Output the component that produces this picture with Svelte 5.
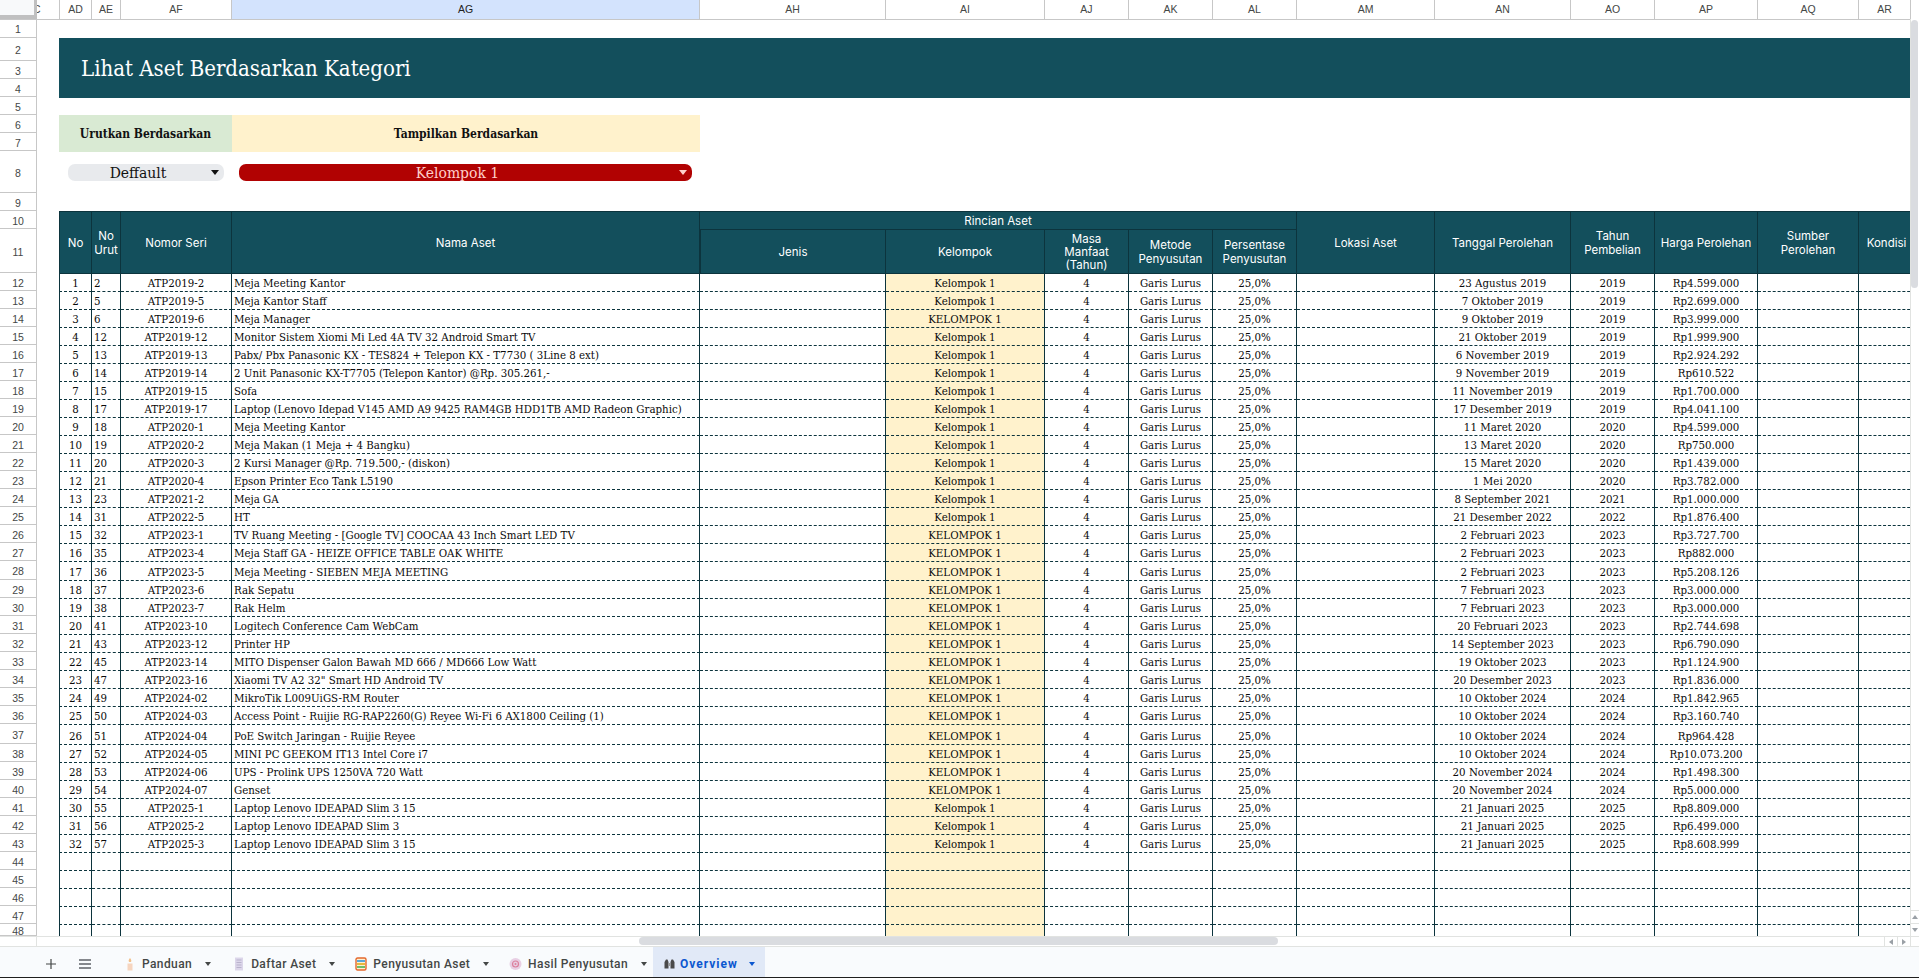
<script lang="ts">
  type Asset = [number, string, string, string, string];

  const columns = [
    { name: "C", width: 23 },
    { name: "AD", width: 32 },
    { name: "AE", width: 29 },
    { name: "AF", width: 111 },
    { name: "AG", width: 468 },
    { name: "AH", width: 186 },
    { name: "AI", width: 159 },
    { name: "AJ", width: 84 },
    { name: "AK", width: 84 },
    { name: "AL", width: 84 },
    { name: "AM", width: 138 },
    { name: "AN", width: 136 },
    { name: "AO", width: 84 },
    { name: "AP", width: 103 },
    { name: "AQ", width: 101 },
    { name: "AR", width: 52 },
  ];

  const rowHeights: Record<number, number> = {
    1: 19, 2: 23, 8: 42, 11: 44, 28: 19, 37: 20, 48: 12,
  };
  const rowNumbers = Array.from({ length: 48 }, (_, i) => i + 1);

  const assets: Asset[] = [
    [2, "ATP2019-2", "Meja Meeting Kantor", "23 Agustus 2019", "Rp4.599.000"],
    [5, "ATP2019-5", "Meja Kantor Staff", "7 Oktober 2019", "Rp2.699.000"],
    [6, "ATP2019-6", "Meja Manager", "9 Oktober 2019", "Rp3.999.000"],
    [12, "ATP2019-12", "Monitor Sistem Xiomi Mi Led 4A TV 32 Android Smart TV", "21 Oktober 2019", "Rp1.999.900"],
    [13, "ATP2019-13", "Pabx/ Pbx Panasonic KX - TES824 + Telepon KX - T7730 ( 3Line 8 ext)", "6 November 2019", "Rp2.924.292"],
    [14, "ATP2019-14", "2 Unit Panasonic KX-T7705 (Telepon Kantor) @Rp. 305.261,-", "9 November 2019", "Rp610.522"],
    [15, "ATP2019-15", "Sofa", "11 November 2019", "Rp1.700.000"],
    [17, "ATP2019-17", "Laptop (Lenovo Idepad V145 AMD A9 9425 RAM4GB HDD1TB AMD Radeon Graphic)", "17 Desember 2019", "Rp4.041.100"],
    [18, "ATP2020-1", "Meja Meeting Kantor", "11 Maret 2020", "Rp4.599.000"],
    [19, "ATP2020-2", "Meja Makan (1 Meja + 4 Bangku)", "13 Maret 2020", "Rp750.000"],
    [20, "ATP2020-3", "2 Kursi Manager @Rp. 719.500,- (diskon)", "15 Maret 2020", "Rp1.439.000"],
    [21, "ATP2020-4", "Epson Printer Eco Tank L5190", "1 Mei 2020", "Rp3.782.000"],
    [23, "ATP2021-2", "Meja GA", "8 September 2021", "Rp1.000.000"],
    [31, "ATP2022-5", "HT", "21 Desember 2022", "Rp1.876.400"],
    [32, "ATP2023-1", "TV Ruang Meeting - [Google TV] COOCAA 43 Inch Smart LED TV", "2 Februari 2023", "Rp3.727.700"],
    [35, "ATP2023-4", "Meja Staff GA - HEIZE OFFICE TABLE OAK WHITE", "2 Februari 2023", "Rp882.000"],
    [36, "ATP2023-5", "Meja Meeting - SIEBEN MEJA MEETING", "2 Februari 2023", "Rp5.208.126"],
    [37, "ATP2023-6", "Rak Sepatu", "7 Februari 2023", "Rp3.000.000"],
    [38, "ATP2023-7", "Rak Helm", "7 Februari 2023", "Rp3.000.000"],
    [41, "ATP2023-10", "Logitech Conference Cam WebCam", "20 Februari 2023", "Rp2.744.698"],
    [43, "ATP2023-12", "Printer HP", "14 September 2023", "Rp6.790.090"],
    [45, "ATP2023-14", "MITO Dispenser Galon Bawah MD 666 / MD666 Low Watt", "19 Oktober 2023", "Rp1.124.900"],
    [47, "ATP2023-16", 'Xiaomi TV A2 32" Smart HD Android TV', "20 Desember 2023", "Rp1.836.000"],
    [49, "ATP2024-02", "MikroTik L009UiGS-RM Router", "10 Oktober 2024", "Rp1.842.965"],
    [50, "ATP2024-03", "Access Point - Ruijie RG-RAP2260(G) Reyee Wi-Fi 6 AX1800 Ceiling (1)", "10 Oktober 2024", "Rp3.160.740"],
    [51, "ATP2024-04", "PoE Switch Jaringan - Ruijie Reyee", "10 Oktober 2024", "Rp964.428"],
    [52, "ATP2024-05", "MINI PC GEEKOM IT13 Intel Core i7", "10 Oktober 2024", "Rp10.073.200"],
    [53, "ATP2024-06", "UPS - Prolink UPS 1250VA 720 Watt", "20 November 2024", "Rp1.498.300"],
    [54, "ATP2024-07", "Genset", "20 November 2024", "Rp5.000.000"],
    [55, "ATP2025-1", "Laptop Lenovo IDEAPAD Slim 3 15", "21 Januari 2025", "Rp8.809.000"],
    [56, "ATP2025-2", "Laptop Lenovo IDEAPAD Slim 3", "21 Januari 2025", "Rp6.499.000"],
    [57, "ATP2025-3", "Laptop Lenovo IDEAPAD Slim 3 15", "21 Januari 2025", "Rp8.608.999"],
  ];

  const groupLabel = (no: number) =>
    no === 3 || (no >= 15 && no <= 29) ? "KELOMPOK 1" : "Kelompok 1";

  const tableColumns = [33, 29, 111, 468, 186, 159, 84, 84, 84, 138, 136, 84, 103, 101, 56];
  const emptyRows = [44, 45, 46, 47, 48];
  const tabs = ["Panduan", "Daftar Aset", "Penyusutan Aset", "Hasil Penyusutan", "Overview"];
</script>

<div class="app">
  <div class="col-heads">
    <div class="corner"></div>
    {#each columns as col}
      <div class="col-head" class:selected={col.name === "AG"} class:clip={col.name === "C"} style:width="{col.width}px">
        {col.name}
      </div>
    {/each}
  </div>

  <div class="main">
    <div class="row-heads">
      {#each rowNumbers as n}
        <div class="row-head" style:height="{rowHeights[n] ?? 18}px">{n}</div>
      {/each}
    </div>

    <div class="sheet">
      <h1 class="banner">Lihat Aset Berdasarkan Kategori</h1>

      <div class="filter-labels">
        <div class="label-sort">Urutkan Berdasarkan</div>
        <div class="label-show">Tampilkan Berdasarkan</div>
      </div>

      <div class="filter-chips">
        <div class="chip chip-sort">
          <span>Deffault</span>
          <i class="caret"></i>
        </div>
        <div class="chip chip-group">
          <span>Kelompok 1</span>
          <i class="caret"></i>
        </div>
      </div>

      <table>
        <colgroup>
          {#each tableColumns as width}
            <col style:width="{width}px" />
          {/each}
        </colgroup>
        <thead>
          <tr class="head-top">
            <th rowspan="2">No</th>
            <th rowspan="2">No<br />Urut</th>
            <th rowspan="2">Nomor Seri</th>
            <th rowspan="2">Nama Aset</th>
            <th colspan="5">Rincian Aset</th>
            <th rowspan="2">Lokasi Aset</th>
            <th rowspan="2">Tanggal Perolehan</th>
            <th rowspan="2">Tahun<br />Pembelian</th>
            <th rowspan="2">Harga Perolehan</th>
            <th rowspan="2">Sumber<br />Perolehan</th>
            <th rowspan="2">Kondisi</th>
          </tr>
          <tr class="head-bottom">
            <th>Jenis</th>
            <th>Kelompok</th>
            <th class="tight">Masa<br />Manfaat<br />(Tahun)</th>
            <th>Metode<br />Penyusutan</th>
            <th>Persentase<br />Penyusutan</th>
          </tr>
        </thead>
        <tbody>
          {#each assets as [urut, serial, name, date, price], i}
            <tr class:row-19={i + 12 === 28} class:row-20={i + 12 === 37}>
              <td class="center">{i + 1}</td>
              <td class="left">{urut}</td>
              <td class="center">{serial}</td>
              <td class="left">{name}</td>
              <td></td>
              <td class="center group">{groupLabel(i + 1)}</td>
              <td class="center">4</td>
              <td class="center">Garis Lurus</td>
              <td class="center">25,0%</td>
              <td></td>
              <td class="center">{date}</td>
              <td class="center">{date.slice(-4)}</td>
              <td class="center">{price}</td>
              <td></td>
              <td></td>
            </tr>
          {/each}
          {#each emptyRows as _}
            <tr>
              {#each tableColumns as _w, c}
                <td class:group={c === 5}></td>
              {/each}
            </tr>
          {/each}
        </tbody>
      </table>
    </div>

    <div class="v-scroll">
      <div class="v-track"><div class="v-thumb"></div></div>
      <div class="v-btn"><i class="tri up"></i></div>
      <div class="v-btn"><i class="tri down"></i></div>
    </div>
  </div>

  <div class="h-scroll">
    <div class="h-gutter"></div>
    <div class="h-track"><div class="h-thumb"></div></div>
    <div class="h-btn"><i class="tri left-tri"></i></div>
    <div class="h-btn"><i class="tri right-tri"></i></div>
    <div class="h-end"></div>
  </div>

  <div class="tab-bar">
    <button class="tool" type="button" aria-label="Tambah sheet">
      <svg width="12" height="12" viewBox="0 0 12 12"><path d="M6 1v10M1 6h10" stroke="#444746" stroke-width="1.2" /></svg>
    </button>
    <button class="tool" type="button" aria-label="Semua sheet">
      <svg width="14" height="14" viewBox="0 0 14 14"><path d="M1 3h12M1 7h12M1 11h12" stroke="#5f6368" stroke-width="1.4" /></svg>
    </button>
    <div class="tabs">
      {#each tabs as tab, i}
        <div class="tab" class:active={i === 4}>
          {#if i === 0}
            <svg width="12" height="14" viewBox="0 0 12 14">
              <path d="M3.5 6.5h5V13.5h-5z" fill="#f6d5bf" />
              <path d="M6 1c1.2 1.6 1.6 2.4 1.2 3.4-.3.9-2 .9-2.4 0C4.4 3.4 4.8 2.6 6 1z" fill="#f3c08a" />
            </svg>
          {:else if i === 1}
            <svg width="12" height="14" viewBox="0 0 12 14">
              <path d="M2 .5h8v13H2z" fill="#dcd6ea" />
              <path d="M3.5 3h5M3.5 5.500h5M3.5 8h5M3.5 10.500h5" stroke="#b9b2cc" stroke-width="1" />
            </svg>
          {:else if i === 2}
            <svg width="12" height="14" viewBox="0 0 12 14">
              <rect x="1" y="1" width="10" height="12" rx="1.5" fill="#fdf0d2" stroke="#e4682c" stroke-width="1.4" />
              <path d="M2 4h8" stroke="#5aa6d8" stroke-width="2" />
              <path d="M2 7h8" stroke="#e8b93c" stroke-width="2" />
              <path d="M2 10h8" stroke="#6fbe6a" stroke-width="2" />
            </svg>
          {:else if i === 3}
            <svg width="13" height="14" viewBox="0 0 13 14">
              <circle cx="6.5" cy="7" r="6" fill="#e8cfe4" />
              <circle cx="6.5" cy="7" r="3" fill="none" stroke="#dc7f9c" stroke-width="1.2" />
              <circle cx="6.5" cy="7" r="1" fill="#dc7f9c" />
            </svg>
          {:else}
            <svg width="13" height="14" viewBox="0 0 13 14">
              <path d="M1.5 5 3 2.500h1.500L5.500 5v6.500h-4zM7.500 5l1-2.500H10L11.500 5v6.500h-4z" fill="#4a4a4a" />
              <path d="M5.500 6h2v3h-2z" fill="#9a9a9a" />
            </svg>
          {/if}
          <span>{tab}</span>
          <i class="tab-caret"></i>
        </div>
      {/each}
    </div>
  </div>
</div>

<style>
  :global(body) {
    margin: 0;
    background: #fff;
  }

  .app {
    display: flex;
    flex-direction: column;
    width: 1919px;
    height: 978px;
    overflow: hidden;
    font-family: "DejaVu Serif", "Liberation Serif", serif;
    font-stretch: condensed;
    color: #111;
  }

  /* sheet chrome */
  .col-heads {
    display: flex;
    flex: none;
    height: 19px;
    box-sizing: content-box;
    margin-bottom: -1px;
    border-bottom: 1px solid #c7c7c7;
    overflow: hidden;
  }

  .corner {
    flex: none;
    width: 34px;
    height: 15px;
    background: #f8f9fa;
    border-right: 3px solid #c0c0c0;
    border-bottom: 4px solid #c0c0c0;
  }

  .col-head {
    flex: none;
    box-sizing: border-box;
    height: 19px;
    line-height: 19px;
    text-align: center;
    font-family: "Liberation Sans", Arial, sans-serif;
    font-stretch: normal;
    font-size: 10.500px;
    color: #444746;
    border-right: 1px solid #c7c7c7;
  }

  .col-head.selected {
    background: #d3e3fd;
    color: #1f1f1f;
  }

  .col-head.clip {
    text-align: left;
    text-indent: -4px;
    overflow: hidden;
  }

  .main {
    display: flex;
    flex: none;
    height: 917px;
    overflow: hidden;
  }

  .row-heads {
    flex: none;
    width: 37px;
    box-sizing: border-box;
    border-right: 1px solid #c7c7c7;
    overflow: hidden;
  }

  .row-head {
    display: flex;
    align-items: center;
    justify-content: center;
    box-sizing: border-box;
    padding-top: 2px;
    font-family: "Liberation Sans", Arial, sans-serif;
    font-stretch: normal;
    font-size: 10.500px;
    color: #444746;
    border-bottom: 1px solid #c7c7c7;
  }

  .sheet {
    flex: none;
    width: 1873px;
    box-sizing: border-box;
    padding: 19px 0 0 22px;
    overflow: hidden;
  }

  .banner {
    display: flex;
    align-items: center;
    height: 60px;
    box-sizing: border-box;
    margin: 0;
    padding: 1px 0 0 22px;
    background: #134f5c;
    color: #fff;
    font-size: 22px;
    font-weight: 400;
  }

  .filter-labels {
    display: flex;
    height: 37px;
    margin-top: 17px;
    font-size: 12px;
    font-weight: 700;
  }

  .label-sort,
  .label-show {
    display: flex;
    align-items: center;
    justify-content: center;
  }

  .label-sort {
    width: 173px;
    background: #d9ead3;
  }

  .label-show {
    width: 468px;
    background: #fff2cc;
  }

  .filter-chips {
    display: flex;
    gap: 15px;
    height: 59px;
    box-sizing: border-box;
    padding: 12px 0 0 9px;
  }

  .chip {
    position: relative;
    display: flex;
    align-items: center;
    justify-content: center;
    height: 17px;
    box-sizing: border-box;
    padding-right: 16px;
    border-radius: 7px;
    font-size: 15.500px;
  }

  .chip-sort {
    width: 156px;
    background: #e8eaed;
    color: #111;
  }

  .chip-group {
    width: 453px;
    background: #b10202;
    color: #ffcfc9;
  }

  .caret {
    position: absolute;
    right: 5px;
    top: 6px;
    width: 0;
    height: 0;
    border-left: 4px solid transparent;
    border-right: 4px solid transparent;
    border-top: 5px solid #111;
  }

  .chip-group .caret {
    border-top-color: #ffcfc9;
  }

  /* asset table */
  table {
    table-layout: fixed;
    border-collapse: separate;
    border-spacing: 0;
    width: 1856px;
  }

  th,
  td {
    box-sizing: border-box;
    padding: 0;
    border-right: 1px solid #0c343d;
  }

  th:first-child,
  td:first-child {
    border-left: 1px solid #0c343d;
  }

  th {
    padding-top: 1px;
    background: #134f5c;
    color: #fff;
    font-family: Inter, "Liberation Sans", sans-serif;
    font-stretch: normal;
    font-weight: 400;
    font-size: 11.500px;
    line-height: 14px;
    border-top: 1px solid #0c343d;
    border-bottom: 1px solid #0c343d;
  }

  .head-top th {
    height: 19px;
  }

  .head-top th[rowspan] {
    height: 63px;
  }

  .head-bottom th {
    height: 44px;
    border-top: 0;
  }

  th.tight {
    line-height: 13px;
  }

  td {
    height: 18px;
    line-height: 15px;
    vertical-align: bottom;
    font-size: 11.400px;
    color: #0a0a0a;
    border-bottom: 1px dashed #0c343d;
    white-space: nowrap;
    overflow: hidden;
  }

  tbody tr.row-19 td {
    height: 19px;
  }

  tbody tr.row-20 td {
    height: 20px;
  }

  .center {
    text-align: center;
  }

  .left {
    text-align: left;
    padding-left: 2px;
  }

  .group {
    background: #fff2cc;
  }

  /* scrollbars */
  .v-scroll {
    display: flex;
    flex-direction: column;
    flex: none;
    width: 9px;
    box-sizing: border-box;
    background: #fff;
    border-left: 1px solid #e1e3e1;
  }

  .v-track {
    flex: 1;
    padding-top: 1px;
  }

  .v-thumb {
    width: 7px;
    height: 268px;
    border-radius: 4px;
    background: #dadce0;
  }

  .v-btn {
    display: flex;
    align-items: center;
    justify-content: center;
    height: 13px;
    box-sizing: border-box;
    border-top: 1px solid #e1e3e1;
  }

  .tri {
    display: block;
    width: 0;
    height: 0;
  }

  .tri.up {
    border-left: 3px solid transparent;
    border-right: 3px solid transparent;
    border-bottom: 4px solid #9aa0a6;
  }

  .tri.down {
    border-left: 3px solid transparent;
    border-right: 3px solid transparent;
    border-top: 4px solid #9aa0a6;
  }

  .tri.left-tri {
    border-top: 3px solid transparent;
    border-bottom: 3px solid transparent;
    border-right: 4px solid #9aa0a6;
  }

  .tri.right-tri {
    border-top: 3px solid transparent;
    border-bottom: 3px solid transparent;
    border-left: 4px solid #9aa0a6;
  }

  .h-scroll {
    display: flex;
    flex: none;
    height: 11px;
    box-sizing: border-box;
    border-top: 1px solid #e1e3e1;
    border-bottom: 1px solid #e1e3e1;
  }

  .h-gutter {
    width: 37px;
    box-sizing: border-box;
    border-right: 1px solid #e1e3e1;
  }

  .h-track {
    flex: 1;
  }

  .h-thumb {
    width: 639px;
    height: 8px;
    margin-left: 602px;
    border-radius: 4px;
    background: #dadce0;
  }

  .h-btn {
    display: flex;
    align-items: center;
    justify-content: center;
    width: 13px;
    box-sizing: border-box;
    border-left: 1px solid #e1e3e1;
  }

  .h-end {
    width: 9px;
    box-sizing: border-box;
    border-left: 1px solid #e1e3e1;
  }

  /* sheet tabs */
  .tab-bar {
    display: flex;
    align-items: stretch;
    flex: none;
    height: 31px;
    box-sizing: border-box;
    padding-left: 34px;
    background: #f9fbfd;
    border-bottom: 1px solid #1f1f1f;
    font-family: Roboto, "Liberation Sans", sans-serif;
    font-stretch: normal;
  }

  .tool {
    display: flex;
    align-items: center;
    justify-content: center;
    width: 34px;
    padding: 3px 0 0;
    border: 0;
    background: transparent;
    cursor: pointer;
  }

  .tabs {
    display: flex;
    margin-left: 12px;
  }

  .tab {
    display: flex;
    align-items: center;
    gap: 6px;
    padding: 4px 10px 0;
    font-size: 12px;
    font-weight: 500;
    letter-spacing: 0.4px;
    color: #444746;
  }

  .tab:first-child {
    padding-right: 12px;
  }

  .tab:nth-child(4) {
    padding-right: 6px;
  }

  .tab.active {
    gap: 4px;
    background: #e1e9f7;
    color: #0b57d0;
    font-weight: 700;
    letter-spacing: 1px;
  }

  .tab-caret {
    width: 0;
    height: 0;
    margin-left: 7px;
    border-left: 3.500px solid transparent;
    border-right: 3.500px solid transparent;
    border-top: 4px solid #444746;
  }

  .tab.active .tab-caret {
    border-top-color: #0b57d0;
  }
</style>
